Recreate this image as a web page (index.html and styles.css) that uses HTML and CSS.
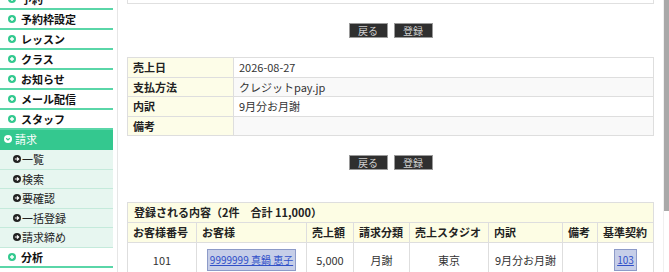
FILE: index.html
```html
<!DOCTYPE html>
<html lang="ja">
<head>
    <meta charset="UTF-8">
    <meta name="viewport" content="width=device-width, initial-scale=1.0">
    <title>請求登録</title>
    <link rel="stylesheet" href="styles.css">
</head>
<body>
    <div id="page">
        <nav id="side">
            <ul class="menu">
                <li class="item first"><svg class="ico" viewBox="0 0 10 10"><circle cx="5" cy="5" r="5" fill="#33c98f"/><path d="M5 2.5v5M2.5 5h5" stroke="#fff" stroke-width="1.8"/></svg>予約</li>
                <li class="item"><svg class="ico" viewBox="0 0 10 10"><circle cx="5" cy="5" r="5" fill="#33c98f"/><path d="M5 2.5v5M2.5 5h5" stroke="#fff" stroke-width="1.8"/></svg>予約枠設定</li>
                <li class="item"><svg class="ico" viewBox="0 0 10 10"><circle cx="5" cy="5" r="5" fill="#33c98f"/><path d="M5 2.5v5M2.5 5h5" stroke="#fff" stroke-width="1.8"/></svg>レッスン</li>
                <li class="item"><svg class="ico" viewBox="0 0 10 10"><circle cx="5" cy="5" r="5" fill="#33c98f"/><path d="M5 2.5v5M2.5 5h5" stroke="#fff" stroke-width="1.8"/></svg>クラス</li>
                <li class="item"><svg class="ico" viewBox="0 0 10 10"><circle cx="5" cy="5" r="5" fill="#33c98f"/><path d="M5 2.5v5M2.5 5h5" stroke="#fff" stroke-width="1.8"/></svg>お知らせ</li>
                <li class="item"><svg class="ico" viewBox="0 0 10 10"><circle cx="5" cy="5" r="5" fill="#33c98f"/><path d="M5 2.5v5M2.5 5h5" stroke="#fff" stroke-width="1.8"/></svg>メール配信</li>
                <li class="item"><svg class="ico" viewBox="0 0 10 10"><circle cx="5" cy="5" r="5" fill="#33c98f"/><path d="M5 2.5v5M2.5 5h5" stroke="#fff" stroke-width="1.8"/></svg>スタッフ</li>
                <li class="item active"><svg class="ico" viewBox="0 0 10 10"><circle cx="5" cy="5" r="5" fill="#fff"/><path d="M2.8 4l2.2 2.2L7.2 4" fill="none" stroke="#33c98f" stroke-width="1.6"/></svg>請求</li>
                <li class="sub"><svg class="ico" viewBox="0 0 10 10"><circle cx="5" cy="5" r="5" fill="#222"/><path d="M2.3 5h4.8M5 2.9l2.1 2.1L5 7.1" fill="none" stroke="#fff" stroke-width="1.5"/></svg>一覧</li>
                <li class="sub"><svg class="ico" viewBox="0 0 10 10"><circle cx="5" cy="5" r="5" fill="#222"/><path d="M2.3 5h4.8M5 2.9l2.1 2.1L5 7.1" fill="none" stroke="#fff" stroke-width="1.5"/></svg>検索</li>
                <li class="sub"><svg class="ico" viewBox="0 0 10 10"><circle cx="5" cy="5" r="5" fill="#222"/><path d="M2.3 5h4.8M5 2.9l2.1 2.1L5 7.1" fill="none" stroke="#fff" stroke-width="1.5"/></svg>要確認</li>
                <li class="sub"><svg class="ico" viewBox="0 0 10 10"><circle cx="5" cy="5" r="5" fill="#222"/><path d="M2.3 5h4.8M5 2.9l2.1 2.1L5 7.1" fill="none" stroke="#fff" stroke-width="1.5"/></svg>一括登録</li>
                <li class="sub"><svg class="ico" viewBox="0 0 10 10"><circle cx="5" cy="5" r="5" fill="#222"/><path d="M2.3 5h4.8M5 2.9l2.1 2.1L5 7.1" fill="none" stroke="#fff" stroke-width="1.5"/></svg>請求締め</li>
                <li class="item"><svg class="ico" viewBox="0 0 10 10"><circle cx="5" cy="5" r="5" fill="#33c98f"/><path d="M5 2.5v5M2.5 5h5" stroke="#fff" stroke-width="1.8"/></svg>分析</li>
            </ul>
        </nav>
        <main id="main">
            <div class="prev-box"></div>
            <div class="buttons">
                <button type="button" class="btn">戻る</button>
                <button type="button" class="btn">登録</button>
            </div>
            <table class="info">
                <tr><th>売上日</th><td>2026-08-27</td></tr>
                <tr><th>支払方法</th><td>クレジットpay.jp</td></tr>
                <tr><th>内訳</th><td>9月分お月謝</td></tr>
                <tr><th>備考</th><td></td></tr>
            </table>
            <div class="buttons">
                <button type="button" class="btn">戻る</button>
                <button type="button" class="btn">登録</button>
            </div>
            <table class="list">
                <colgroup>
                    <col class="c1"><col class="c2"><col class="c3"><col class="c4">
                    <col class="c5"><col class="c6"><col class="c7"><col class="c8">
                </colgroup>
                <tr><th colspan="8" class="caption">登録される内容（2件　合計 11,000）</th></tr>
                <tr class="head">
                    <th>お客様番号</th>
                    <th>お客様</th>
                    <th>売上額</th>
                    <th>請求分類</th>
                    <th>売上スタジオ</th>
                    <th>内訳</th>
                    <th>備考</th>
                    <th>基準契約</th>
                </tr>
                <tr>
                    <td>101</td>
                    <td><a href="#" class="hl">9999999 真鍋 恵子</a></td>
                    <td>5,000</td>
                    <td>月謝</td>
                    <td>東京</td>
                    <td>9月分お月謝</td>
                    <td></td>
                    <td><a href="#" class="hl">103</a></td>
                </tr>
            </table>
        </main>
        <div id="scroll"><div class="thumb"></div></div>
    </div>
</body>
</html>
```

FILE: styles.css
```css
html, body {
    margin: 0;
    padding: 0;
    height: 272px;
    overflow: hidden;
    background-color: #ffffff;
    font-family: "Noto Sans CJK JP", "Noto Sans", sans-serif;
    font-size: 11px;
    color: #333333;
}
#page {
    display: flex;
    height: 272px;
}
#side {
    width: 113px;
    flex-shrink: 0;
    margin-right: 4px;
}
.menu {
    list-style: none;
    margin: 0;
    padding: 0;
}
.menu li {
    display: flex;
    align-items: center;
    white-space: nowrap;
}
.item {
    height: 18px;
    border-bottom: 2px solid #5ad6a8;
    padding-left: 8px;
    font-weight: bold;
    color: #111111;
}
.item.first {
    margin-top: -10px;
}
.item .ico {
    width: 8px;
    height: 8px;
    margin-right: 5px;
}
.item.active {
    background-color: #34c88f;
    border-bottom-color: #34c88f;
    color: #ffffff;
    padding-left: 4px;
    font-weight: normal;
}
.item.active .ico {
    margin-right: 3px;
}
.sub {
    height: 18.5px;
    border-bottom: 1px solid #c4eadb;
    background-color: #e7f6f0;
    padding-left: 13px;
    color: #222222;
}
.sub .ico {
    width: 8px;
    height: 8px;
    margin-right: 1px;
}
#main {
    flex: 1;
    border-left: 1px solid #e6e6e6;
    padding: 0 9px;
}
.prev-box {
    height: 3px;
    border: 1px solid #e0e0e0;
    border-top: none;
}
.buttons {
    display: flex;
    justify-content: center;
    gap: 6px;
    margin: 19px 0;
}
.btn {
    width: 39px;
    height: 15px;
    padding: 0;
    background-color: #2f2f2f;
    border: 1px solid #9a9a9a;
    color: #cfcfcf;
    font-family: "Noto Sans CJK JP", sans-serif;
    font-size: 10px;
    line-height: 12px;
}
table {
    width: 100%;
    border-collapse: collapse;
}
.info th, .info td {
    border: 1px solid #dedede;
    padding: 2px 5px;
    line-height: 14.5px;
    text-align: left;
}
.info th {
    width: 95px;
    background-color: #fdfde8;
    font-weight: bold;
    color: #222222;
}
.info tr:nth-child(even) td {
    background-color: #f9f9f9;
}
.list {
    margin-top: 32px;
    table-layout: fixed;
}
.list th, .list td {
    border: 1px solid #dedede;
    padding: 2px 5px;
    line-height: 14.5px;
    white-space: nowrap;
    overflow: hidden;
}
.list th {
    background-color: #fdfde4;
    text-align: left;
    font-weight: bold;
    color: #222222;
}
.list th.caption {
    padding-left: 6px;
    line-height: 15px;
}
.list td {
    text-align: center;
    padding: 6px 2px 8px;
    line-height: 16px;
}
.c1 { width: 69px; }
.c2 { width: 110px; }
.c3 { width: 47px; }
.c4 { width: 56px; }
.c5 { width: 79px; }
.c6 { width: 74px; }
.c7 { width: 35px; }
.c8 { width: 56px; }
.hl {
    display: inline-block;
    padding: 3px 2px;
    font-size: 10px;
    line-height: 14px;
    background-color: #c6cee8;
    border: 1px solid #8d9bc8;
    color: #3050c8;
    text-decoration: underline;
}
#scroll {
    width: 6px;
    flex-shrink: 0;
    border-left: 1px solid #f0f0f0;
}
.thumb {
    height: 211px;
    background-color: #a9a9a9;
}
```
